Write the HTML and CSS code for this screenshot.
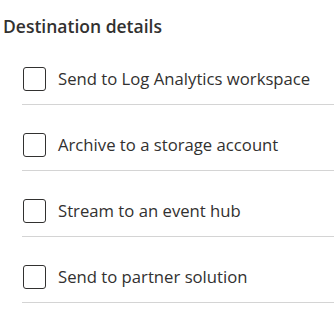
FILE: index.html
```html
<!DOCTYPE html>
<html lang="en">
<head>
    <meta charset="UTF-8">
    <title>Destination details</title>
    <link rel="stylesheet" href="styles.css">
</head>
<body>
    <section class="destination">
        <h2 class="title">Destination details</h2>
        <ul class="options">
            <li class="option">
                <label><input type="checkbox"><span class="box"></span>Send to Log Analytics workspace</label>
            </li>
            <li class="option">
                <label><input type="checkbox"><span class="box"></span>Archive to a storage account</label>
            </li>
            <li class="option">
                <label><input type="checkbox"><span class="box"></span>Stream to an event hub</label>
            </li>
            <li class="option">
                <label><input type="checkbox"><span class="box"></span>Send to partner solution</label>
            </li>
        </ul>
    </section>
</body>
</html>
```

FILE: styles.css
```css
* {
    margin: 0;
    padding: 0;
    box-sizing: border-box;
}

body {
    font-family: 'Open Sans', 'Noto Sans', sans-serif;
    color: #323130;
    background: #fff;
}

.destination {
    padding: 13px 0 0 3px;
}

.title {
    font-size: 17.5px;
    font-weight: 600;
    line-height: 26px;
    color: #323130;
}

.options {
    list-style: none;
    margin-left: 19px;
}

.option {
    padding: 28px 0 13px 1px;
    border-bottom: 1px solid #d4d4d4;
}

.option label {
    display: flex;
    align-items: center;
    gap: 12px;
    font-size: 16.7px;
    line-height: 24px;
    cursor: pointer;
}

.option input {
    display: none;
}

.box {
    width: 23px;
    height: 24px;
    border: 1px solid #323130;
    border-radius: 3px;
    flex-shrink: 0;
}
```
